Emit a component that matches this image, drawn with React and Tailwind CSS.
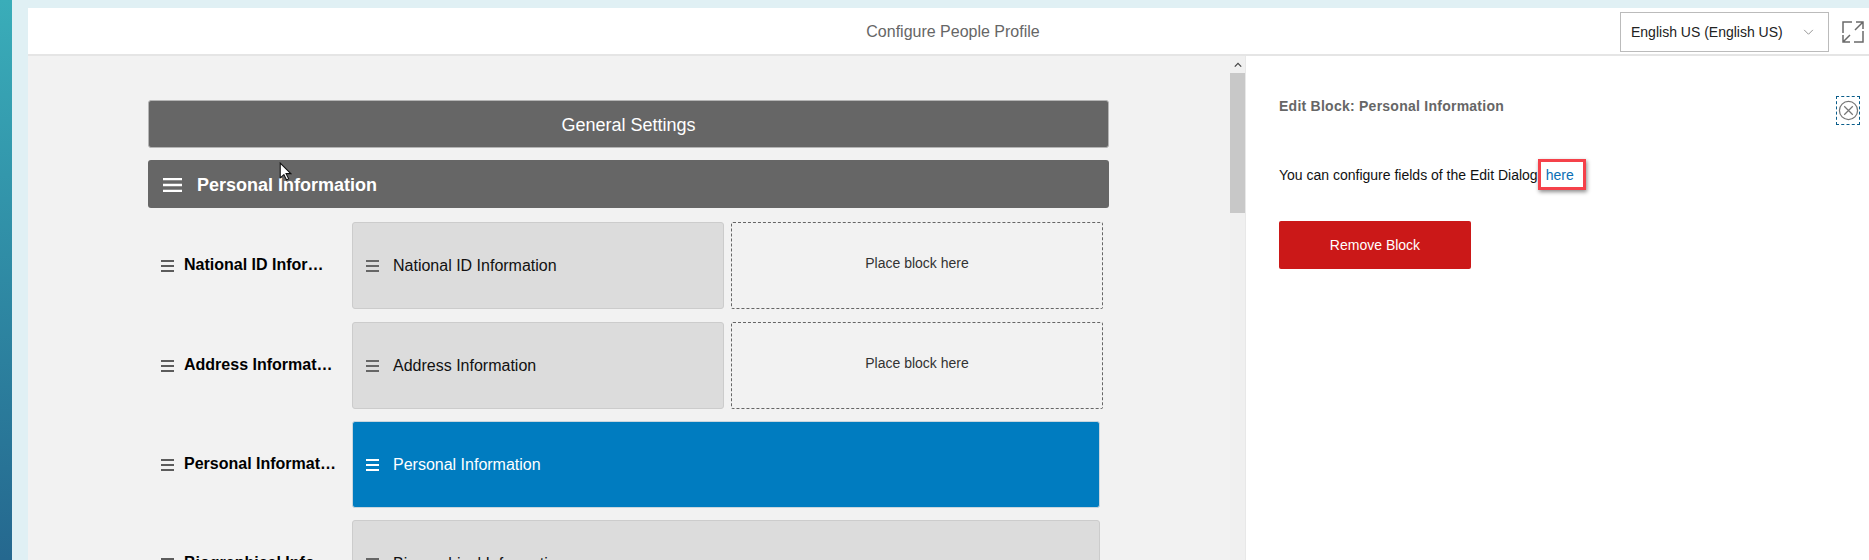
const font = { fontFamily: '"Liberation Sans", Arial, sans-serif' };

function Bars({ className }) {
  return (
    <svg viewBox="0 0 14 12" className={className} fill="none" stroke="currentColor" strokeWidth="2" preserveAspectRatio="none">
      <path d="M0 1h14M0 6h14M0 11h14" />
    </svg>
  );
}

function Block({ label, active, wide }) {
  const tone = active
    ? "bg-[#007cc0] border-[#c9d6de] text-white"
    : "bg-[#dcdcdc] border-[#cccccc] text-[#111]";
  return (
    <div
      className={`flex items-center h-full rounded-[3px] border pl-[13px] text-[16px] ${tone} ${
        wide ? "w-[748px]" : "w-[372px]"
      }`}
    >
      <Bars className={`w-[13px] h-[12px] mr-[14px] ${active ? "text-white" : "text-[#666]"}`} />
      <span>{label}</span>
    </div>
  );
}

function Row({ title, block, active, wide, placeholder, className }) {
  return (
    <div className={`flex h-[87px] ${className}`}>
      <div className="w-[204px] pl-[13px] flex items-center shrink-0 text-[#000]">
        <Bars className="w-[13px] h-[12px] mr-[10px] text-[#5c5c5c] shrink-0" />
        <span className="font-bold text-[16px] whitespace-nowrap pb-[1px]">{title}</span>
      </div>
      <Block label={block} active={active} wide={wide} />
      {placeholder && (
        <div className="ml-[7px] w-[372px] h-full border border-dashed border-[#666] rounded-[2px] flex items-center justify-center text-[14px] text-[#333] pb-[4px]">
          Place block here
        </div>
      )}
    </div>
  );
}

export default function App() {
  return (
    <div style={font} className="flex w-[1869px] h-[560px] overflow-hidden bg-[#e0f0f4]">
      <div className="w-[12px] shrink-0 bg-gradient-to-b from-[#3aadb9] to-[#25688f]" />
      <div className="w-[16px] shrink-0" />
      <div className="flex-1 mt-[8px] flex flex-col bg-white min-w-0">
        <header className="flex items-center h-[48px] shrink-0 border-b-2 border-[#e5e5e5] pt-[2px]">
          <div className="flex-1 pl-[258px] text-center text-[16px] text-[#666]">Configure People Profile</div>
          <div className="flex items-center justify-between w-[209px] h-[40px] border border-[#bbbbbb] pl-[10px] pr-[14px] text-[14px] text-[#222]">
            <span>English US (English US)</span>
            <svg viewBox="0 0 12 8" className="w-[11px] h-[7px] text-[#888]" fill="none" stroke="currentColor" strokeWidth="1">
              <path d="M1 1l5 5 5-5" />
            </svg>
          </div>
          <svg viewBox="0 0 22 22" className="w-[22px] h-[22px] ml-[13px] mr-[5px] text-[#6a6a6a]" fill="none" stroke="currentColor" strokeWidth="1.5">
            <path d="M1 12V1h9M12 21h9V10M14 1h7v7M21 1l-8 8M1 14v7h7M1 21l7-7" />
          </svg>
        </header>

        <div className="flex flex-1 min-h-0">
          <main className="relative w-[1202px] shrink-0 bg-[#f2f2f2] pl-[120px] pt-[44px] overflow-hidden">
            <div className="w-[961px] h-[48px] flex items-center justify-center rounded-[3px] bg-[#666666] border border-[#b5b5b5] text-white text-[18px] pt-[3px]">
              General Settings
            </div>
            <div className="w-[961px] h-[48px] mt-[12px] flex items-center rounded-[3px] bg-[#666666] pl-[15px] text-white pt-[2px]">
              <Bars className="w-[19px] h-[14px] mr-[15px]" />
              <span className="font-bold text-[18px]">Personal Information</span>
            </div>
            <div className="mt-[14px]">
              <Row title="National ID Infor…" block="National ID Information" placeholder />
              <Row title="Address Informat…" block="Address Information" placeholder className="mt-[13px]" />
              <Row title="Personal Informat…" block="Personal Information" active wide className="mt-[12px]" />
              <Row title="Biographical Info…" block="Biographical Information" wide className="mt-[12px]" />
            </div>
            {/* mouse pointer from the capture */}
            <svg viewBox="0 0 12 18" className="absolute left-[251px] top-[106px] w-[13px] h-[19px]">
              <path d="M1 1v14l3.5-3 2.5 5 2-1-2.500-5H11z" fill="#fff" stroke="#111" strokeWidth="1" />
            </svg>
          </main>

          <div className="w-[16px] shrink-0 flex flex-col bg-[#f0f0f0] border-r border-[#e8e8e8]">
            <div className="h-[17px] flex items-center justify-center">
              <svg viewBox="0 0 10 6" className="w-[8px] h-[6px] text-[#444]" fill="none" stroke="currentColor" strokeWidth="1.600">
                <path d="M1 5l4-4 4 4" />
              </svg>
            </div>
            <div className="w-[15px] h-[140px] bg-[#c8c8c8]" />
          </div>

          <aside className="relative flex-1 pl-[33px] pt-[40px]">
            <div className="font-bold text-[14px] text-[#666] tracking-[0.25px]">Edit Block: Personal Information</div>
            <div className="mt-[48px] flex items-center text-[14px] text-[#111]">
              <span>You can configure fields of the Edit Dialog</span>
              <span className="relative ml-[8px] text-[#0a6fb4]">
                here
                <span className="absolute left-[-8px] top-[-6px] w-[48px] h-[31px] border-[3px] border-[#f5414a] shadow-[1px_2px_4px_rgba(0,0,0,0.45)]" />
              </span>
            </div>
            <button className="mt-[35px] w-[192px] h-[48px] rounded-[2px] bg-[#cb1818] text-white text-[14px]">
              Remove Block
            </button>
            <div className="absolute right-[9px] top-[40px] w-[24px] h-[29px] flex items-center justify-center border border-dashed border-[#0a5d8a]">
              <svg viewBox="0 0 22 22" className="w-[21px] h-[21px] text-[#777]" fill="none" stroke="currentColor" strokeWidth="1.300">
                <circle cx="11" cy="11" r="9.500" />
                <path d="M6.500 6.500l9 9M15.500 6.500l-9 9" />
              </svg>
            </div>
          </aside>
        </div>
      </div>
    </div>
  );
}
